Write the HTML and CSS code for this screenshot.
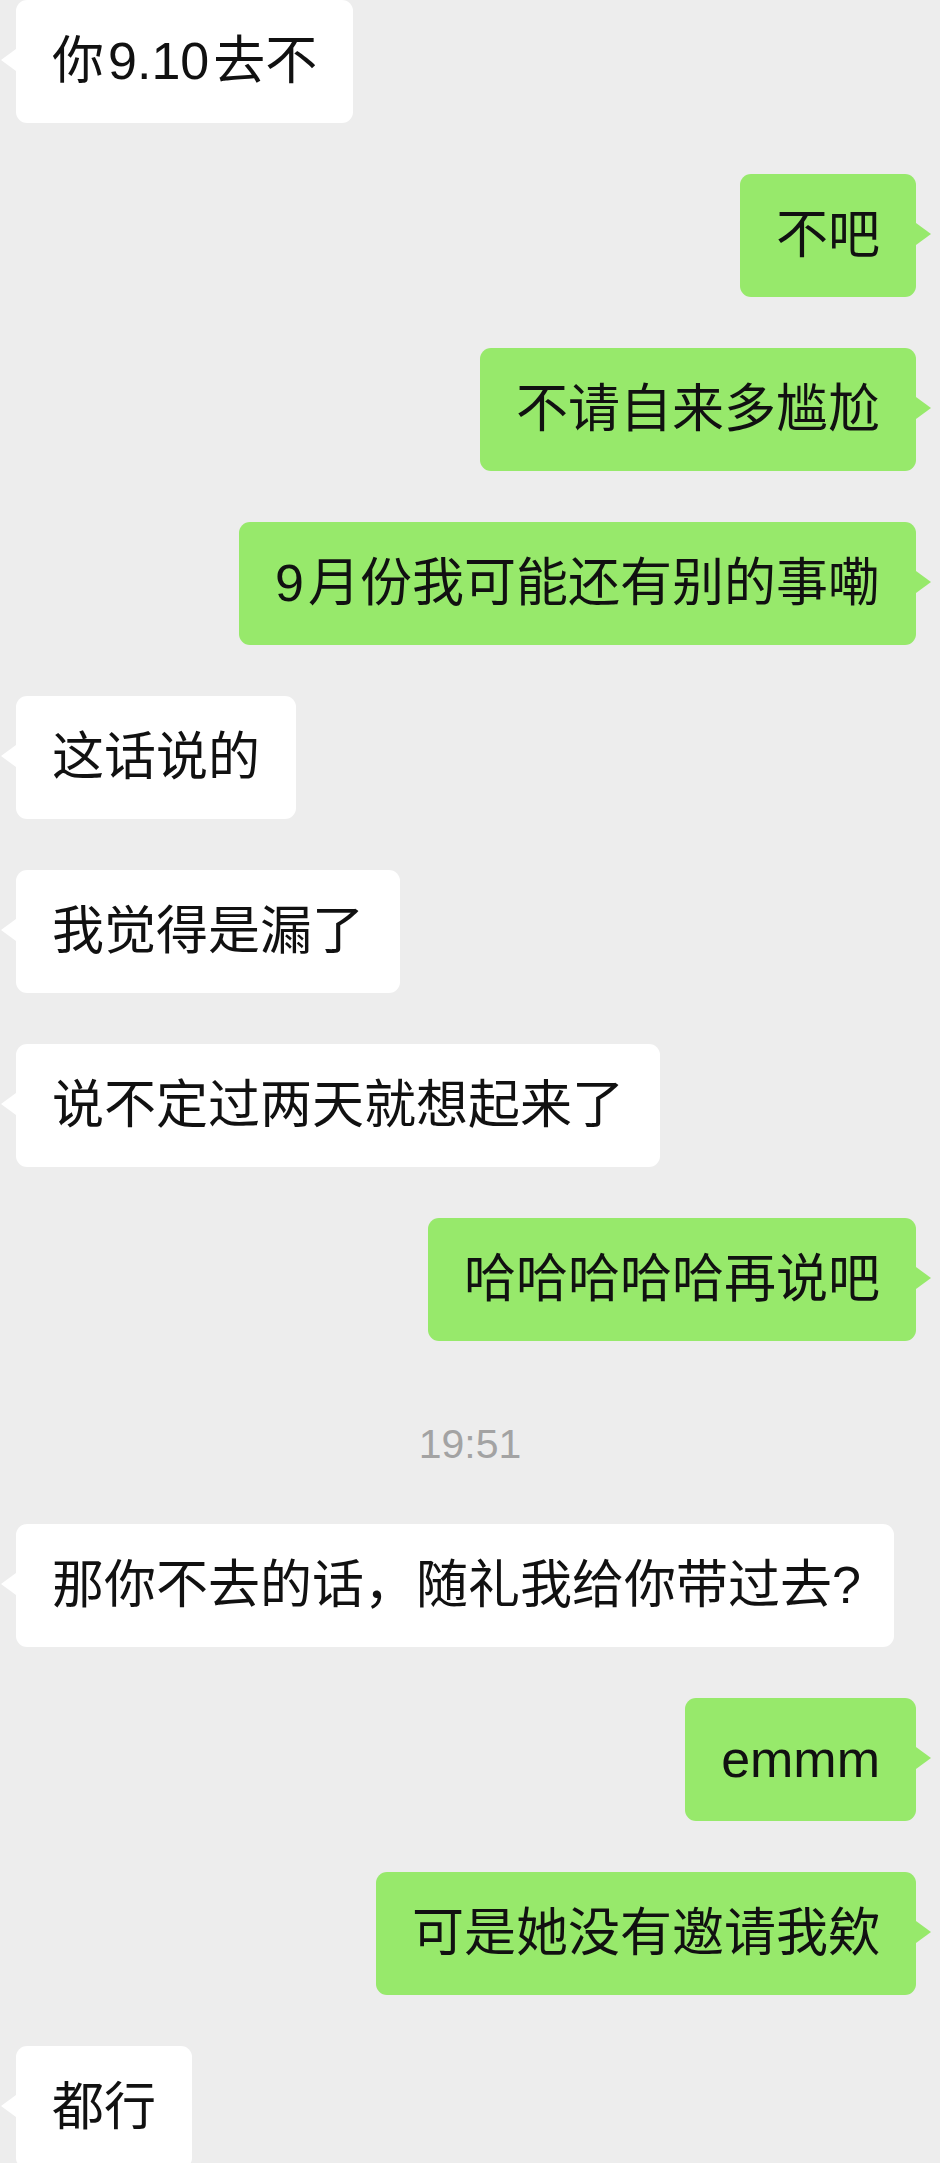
FILE: index.html
```html
<!DOCTYPE html>
<html>
  <head>
    <meta charset="utf-8">
    <meta name="viewport" content="width=device-width, initial-scale=1">
    <title>聊天记录</title>
    <link rel="stylesheet" href="styles.css">
  </head>
  <body>
    <div class="chat">
      <div class="row them"><div class="bubble">你<span class="num">9.10</span>去不</div></div>
      <div class="row me"><div class="bubble">不吧</div></div>
      <div class="row me"><div class="bubble">不请自来多尴尬</div></div>
      <div class="row me"><div class="bubble"><span class="lead">9</span>月份我可能还有别的事嘞</div></div>
      <div class="row them"><div class="bubble">这话说的</div></div>
      <div class="row them"><div class="bubble">我觉得是漏了</div></div>
      <div class="row them"><div class="bubble">说不定过两天就想起来了</div></div>
      <div class="row me"><div class="bubble">哈哈哈哈哈再说吧</div></div>
      <div class="time">19:51</div>
      <div class="row them"><div class="bubble">那你不去的话，随礼我给你带过去<span class="q">?</span></div></div>
      <div class="row me"><div class="bubble">emmm</div></div>
      <div class="row me"><div class="bubble">可是她没有邀请我欸</div></div>
      <div class="row them"><div class="bubble">都行</div></div>
    </div>
  </body>
</html>
```

FILE: styles.css
```css
* {
  font-family: "Liberation Sans", "Noto Sans CJK SC", sans-serif;
  box-sizing: border-box;
}

body {
  margin: 0;
  background-color: #ededed;
}

.chat {
  display: flex;
  flex-direction: column;
  gap: 51px;
}

.row {
  display: flex;
}

.row.them {
  justify-content: flex-start;
  padding-left: 16px;
}

.row.me {
  justify-content: flex-end;
  padding-right: 24px;
}

.bubble {
  position: relative;
  padding: 27px 36px;
  font-size: 52px;
  line-height: 69px;
  color: #111111;
  border-radius: 11px;
  white-space: nowrap;
}

.them .bubble {
  background-color: #ffffff;
}

.me .bubble {
  background-color: #97e96b;
}

/* little tails */
.bubble::before {
  content: "";
  position: absolute;
  top: 49px;
  border-top: 11px solid transparent;
  border-bottom: 11px solid transparent;
}

.them .bubble::before {
  left: -15px;
  border-right: 15px solid #ffffff;
}

.me .bubble::before {
  right: -15px;
  border-left: 15px solid #97e96b;
}

.num {
  margin: 0 4px;
}

.lead {
  margin-right: 4px;
}

.q {
  margin-right: -3px;
}

.time {
  height: 81px;
  padding-top: 31px;
  text-align: center;
  font-size: 41px;
  line-height: 42px;
  color: #a3a3a3;
}
```
